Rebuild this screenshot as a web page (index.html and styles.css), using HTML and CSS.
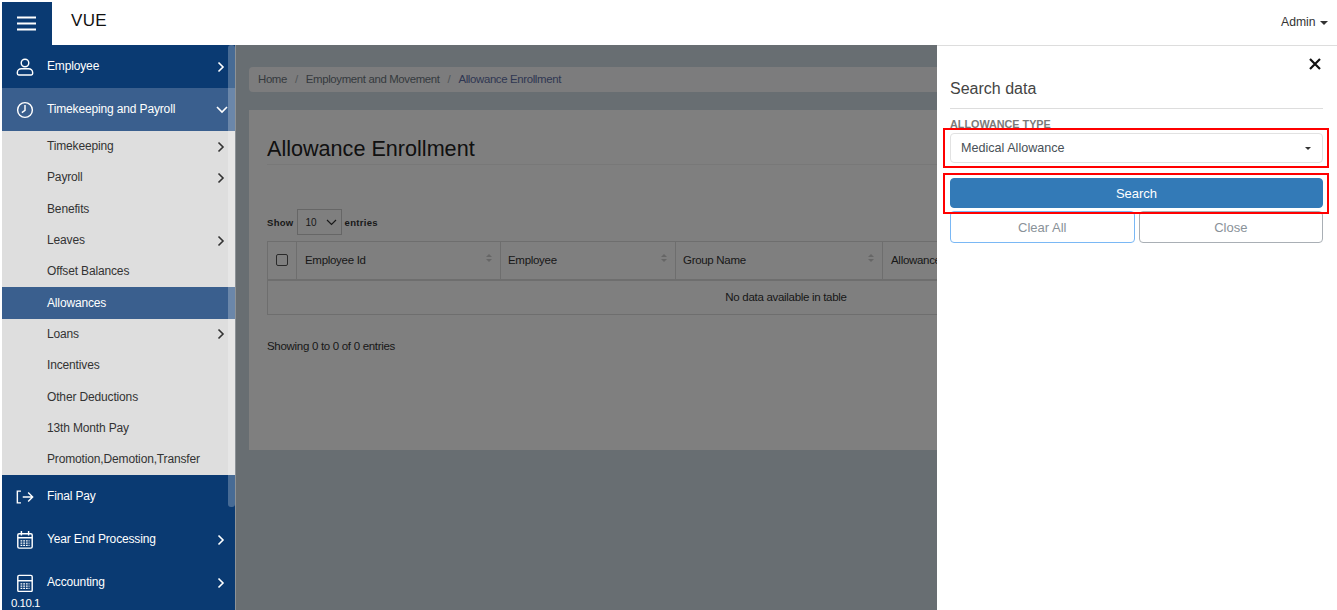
FILE: index.html
```html
<!DOCTYPE html>
<html lang="en">
<head>
    <meta charset="UTF-8">
    <meta name="viewport" content="width=device-width, initial-scale=1.0">
    <title>Allowance Enrollment</title>
    <link rel="stylesheet" href="styles.css">
</head>
<body>

  <header class="topbar">
    <button class="menu-toggle">
      <svg width="20" height="16" viewBox="0 0 20 16"><path d="M0 1.5h19M0 7.5h19M0 13.5h19" stroke="#fff" stroke-width="2" fill="none"/></svg>
    </button>
    <div class="brand">VUE</div>
    <div class="user">Admin <span class="caret"></span></div>
  </header>

  <div class="layout">
    <aside class="sidebar">
      <ul class="nav">
        <li class="nav-item">
          <svg class="nav-icon" viewBox="0 0 20 20"><circle cx="10" cy="5.5" r="4.200"/><path d="M3 18.800h14a1.500 1.500 0 0 0 1.500-1.500v-1.300c0-2.500-2-4-4.500-4H6c-2.500 0-4.500 1.500-4.500 4v1.300A1.500 1.500 0 0 0 3 18.800z"/></svg>
          <span>Employee</span>
          <svg class="chev" viewBox="0 0 10 12"><path d="M2.500 1.500l4.500 4.500-4.500 4.500"/></svg>
        </li>
        <li class="nav-item open">
          <svg class="nav-icon" viewBox="0 0 20 20"><circle cx="10" cy="10" r="8.200"/><path d="M10 4.500v6l-3.500 2.500"/></svg>
          <span>Timekeeping and Payroll</span>
          <svg class="chev chev-down" viewBox="0 0 12 8"><path d="M1 1l5 5 5-5"/></svg>
        </li>
        <li>
          <ul class="subnav">
            <li class="sub-item"><span>Timekeeping</span><svg class="chev" viewBox="0 0 10 12"><path d="M2.500 1.500l4.500 4.500-4.500 4.500"/></svg></li>
            <li class="sub-item"><span>Payroll</span><svg class="chev" viewBox="0 0 10 12"><path d="M2.500 1.500l4.500 4.500-4.500 4.500"/></svg></li>
            <li class="sub-item"><span>Benefits</span></li>
            <li class="sub-item"><span>Leaves</span><svg class="chev" viewBox="0 0 10 12"><path d="M2.500 1.500l4.500 4.500-4.500 4.500"/></svg></li>
            <li class="sub-item"><span>Offset Balances</span></li>
            <li class="sub-item active"><span>Allowances</span></li>
            <li class="sub-item"><span>Loans</span><svg class="chev" viewBox="0 0 10 12"><path d="M2.500 1.500l4.500 4.500-4.500 4.500"/></svg></li>
            <li class="sub-item"><span>Incentives</span></li>
            <li class="sub-item"><span>Other Deductions</span></li>
            <li class="sub-item"><span>13th Month Pay</span></li>
            <li class="sub-item"><span>Promotion,Demotion,Transfer</span></li>
          </ul>
        </li>
        <li class="nav-item">
          <svg class="nav-icon" viewBox="0 0 20 20"><path d="M5.500 3.500H1.500v13h4M7.500 10h11M13.500 5l5 5-5 5"/></svg>
          <span>Final Pay</span>
        </li>
        <li class="nav-item">
          <svg class="nav-icon" viewBox="0 0 20 20"><rect x="2" y="3" width="16" height="16" rx="1.500"/><path d="M6 0v5M14 0v5M2 7.500h16"/><path class="dots" d="M5 11h10M5 13.500h10M5 16h10" stroke-dasharray="2 1"/></svg>
          <span>Year End Processing</span>
          <svg class="chev" viewBox="0 0 10 12"><path d="M2.500 1.500l4.500 4.500-4.500 4.500"/></svg>
        </li>
        <li class="nav-item">
          <svg class="nav-icon" viewBox="0 0 20 20"><rect x="2" y="1.500" width="16" height="18" rx="1.500"/><path d="M2 7.500h16"/><path class="dots" d="M5 11h10M5 13.500h10M5 16h10" stroke-dasharray="2 1"/></svg>
          <span>Accounting</span>
          <svg class="chev" viewBox="0 0 10 12"><path d="M2.500 1.500l4.500 4.500-4.500 4.500"/></svg>
        </li>
      </ul>
      <div class="scroll-thumb"></div>
      <div class="version">0.10.1</div>
    </aside>

    <main class="content">
      <nav class="breadcrumb">
        <span>Home</span><i>/</i><span>Employment and Movement</span><i>/</i><span class="current">Allowance Enrollment</span>
      </nav>

      <section class="card">
        <h1>Allowance Enrollment</h1>
        <div class="length">
          <b>Show</b>
          <div class="length-select">10
            <svg width="11" height="7" viewBox="0 0 11 7"><path d="M1 1l4.500 4.500L10 1" fill="none" stroke="#333" stroke-width="1.200"/></svg>
          </div>
          <b>entries</b>
        </div>
        <table class="grid">
          <thead>
            <tr>
              <th class="col-check"><span class="checkbox"></span></th>
              <th class="col-id">Employee Id<span class="sort"></span></th>
              <th class="col-emp">Employee<span class="sort"></span></th>
              <th class="col-group">Group Name<span class="sort"></span></th>
              <th class="col-rest">Allowance Type</th>
            </tr>
          </thead>
          <tbody>
            <tr><td colspan="5" class="empty">No data available in table</td></tr>
          </tbody>
        </table>
        <p class="info">Showing 0 to 0 of 0 entries</p>
      </section>

      <div class="backdrop"></div>

      <div class="panel">
        <div class="panel-close">
          <svg width="12" height="12" viewBox="0 0 12 12"><path d="M1 1l10 10M11 1L1 11" stroke="#111" stroke-width="2.200" fill="none"/></svg>
        </div>
        <h2>Search data</h2>
        <label>ALLOWANCE TYPE</label>
        <div class="marked">
          <div class="select">Medical Allowance <span class="caret"></span></div>
        </div>
        <div class="marked marked-btn">
          <button class="btn-search">Search</button>
        </div>
        <div class="panel-actions">
          <button class="btn-clear">Clear All</button>
          <button class="btn-close">Close</button>
        </div>
      </div>
    </main>
  </div>

</body>
</html>
```

FILE: styles.css
```css
* {
    margin: 0;
    padding: 0;
    box-sizing: border-box;
    font-family: 'Liberation Sans', Arial, sans-serif;
}
html, body {
    height: 100%;
    overflow: hidden;
}
body {
    background: #fff;
    color: #212529;
    font-size: 13px;
}
.topbar {
    display: flex;
    align-items: center;
    height: 45px;
    padding: 2px 0 0 2px;
    background: #fff;
}
.menu-toggle {
    display: flex;
    align-items: center;
    justify-content: center;
    width: 50px;
    height: 43px;
    border: none;
    background: #0a3a72;
}
.brand {
    margin-left: 19px;
    margin-top: -5px;
    font-size: 17px;
    letter-spacing: 0.3px;
    color: #111;
}
.user {
    margin-left: auto;
    margin-right: 9px;
    margin-top: -3px;
    font-size: 12.200px;
    color: #333;
}
.caret {
    display: inline-block;
    vertical-align: middle;
    border-top: 4px solid #333;
    border-left: 4px solid transparent;
    border-right: 4px solid transparent;
}
.user .caret {
    margin-left: 1px;
}
.layout {
    display: flex;
    height: 565px;
}

/* sidebar */
.sidebar {
    position: relative;
    flex: none;
    width: 236px;
    overflow: hidden;
    background: #0a3a72;
    border-right: 1px solid #8d9296;
    border-left: 2px solid #fff;
}
.nav {
    list-style: none;
}
.nav-item {
    display: flex;
    align-items: center;
    height: 43px;
    padding-left: 14px;
    color: #fff;
    font-size: 12px;
    letter-spacing: -0.15px;
}
.nav-item span {
    margin-top: -2px;
}
.nav-item.open {
    background: #3a5f8e;
}
.nav-icon {
    flex: none;
    width: 18px;
    height: 18px;
    margin-right: 13px;
    fill: none;
    stroke: #fff;
    stroke-width: 1.600;
}
.nav-icon .dots {
    stroke-width: 1.500;
}
.chev {
    width: 10px;
    height: 12px;
    margin-left: auto;
    margin-right: 9px;
    fill: none;
    stroke: #fff;
    stroke-width: 1.600;
}
.chev-down {
    width: 12px;
    height: 8px;
    margin-right: 7px;
}
.subnav {
    list-style: none;
    background: #dedede;
}
.sub-item {
    display: flex;
    align-items: center;
    height: 31.3px;
    padding-left: 45px;
    color: #333;
    font-size: 12px;
    letter-spacing: -0.15px;
}
.sub-item span {
    margin-top: -1px;
}
.sub-item .chev {
    stroke: #333;
}
.sub-item.active {
    background: #3a5f8e;
    color: #fff;
}
.scroll-thumb {
    position: absolute;
    top: 0;
    right: 0;
    width: 7px;
    height: 462px;
    border-radius: 3px;
    background: rgba(255, 255, 255, 0.25);
}
.version {
    position: absolute;
    left: 9px;
    bottom: 0;
    color: #fff;
    font-size: 11.500px;
    letter-spacing: -0.5px;
    line-height: 13px;
}

/* main */
.content {
    position: relative;
    flex: 1;
    padding: 22px 0 0 13px;
    overflow: hidden;
    background: #d0dde5;
}
.breadcrumb {
    display: flex;
    align-items: center;
    width: 1100px;
    height: 25px;
    padding: 0 0 2px 9px;
    border-radius: 4px;
    background: #f8f9fa;
    font-size: 11.400px;
    letter-spacing: -0.35px;
    color: #6c757d;
}
.breadcrumb i {
    padding: 0 8px;
    font-style: normal;
    color: #a4abb2;
}
.breadcrumb .current {
    color: #5f6ea6;
}
.card {
    width: 1100px;
    height: 340px;
    margin-top: 18px;
    padding: 25px 0 0 18px;
    background: #fff;
}
.card h1 {
    height: 30px;
    padding-top: 1px;
    font-size: 21.600px;
    font-weight: 400;
    line-height: 26px;
    color: #222;
    border-bottom: 1px solid #f0f0f0;
}
.length {
    display: flex;
    align-items: center;
    gap: 3px;
    margin-top: 44px;
    font-size: 9.500px;
    color: #333;
}
.length b {
    letter-spacing: 0.3px;
}
.length-select {
    display: flex;
    align-items: center;
    justify-content: space-between;
    width: 45px;
    height: 26px;
    padding: 0 4px 0 8px;
    border: 1px solid #ccc;
    font-size: 10px;
}
.grid {
    width: 1038px;
    margin-top: 6px;
    border-collapse: collapse;
    table-layout: fixed;
    font-size: 11.500px;
    letter-spacing: -0.3px;
    color: #333;
}
.grid th {
    position: relative;
    height: 38px;
    padding-left: 8px;
    border: 1px solid #ddd;
    border-bottom-width: 2px;
    font-weight: 400;
    text-align: left;
    white-space: nowrap;
    overflow: hidden;
}
.grid th.col-emp, .grid th.col-group {
    padding-left: 7px;
}
.col-check { width: 29px; }
.col-id { width: 204px; }
.col-emp { width: 175px; }
.col-group { width: 207px; }
.checkbox {
    display: block;
    width: 12px;
    height: 12px;
    border: 1px solid #555;
    border-radius: 2px;
}
.sort {
    position: absolute;
    top: 12px;
    right: 8px;
    width: 6px;
    height: 8px;
}
.sort::before, .sort::after {
    content: "";
    position: absolute;
    left: 0;
    border-left: 3px solid transparent;
    border-right: 3px solid transparent;
}
.sort::before {
    top: 0;
    border-bottom: 3px solid #ccc;
}
.sort::after {
    bottom: 0;
    border-top: 3px solid #ccc;
}
.empty {
    height: 35px;
    border: 1px solid #ddd;
    text-align: center;
}
.info {
    margin-top: 25px;
    font-size: 11.500px;
    letter-spacing: -0.3px;
    color: #333;
}
.backdrop {
    position: absolute;
    inset: 0;
    background: rgba(0, 0, 0, 0.5);
}

/* search panel */
.panel {
    position: absolute;
    top: 0;
    right: 0;
    bottom: 0;
    width: 400px;
    padding: 0 14px 0 13px;
    background: #fff;
    border-top: 1px solid #ddd;
}
.panel-close {
    display: flex;
    justify-content: flex-end;
    padding: 12px 2px 0 0;
}
.panel h2 {
    margin-top: 9px;
    padding-bottom: 9px;
    border-bottom: 1px solid #ddd;
    font-size: 16px;
    font-weight: 400;
    line-height: 20px;
    color: #444;
}
.panel label {
    display: block;
    margin-top: 9px;
    font-size: 10.800px;
    font-weight: 700;
    line-height: 12px;
    color: #7a7a7a;
}
.marked {
    position: relative;
    z-index: 1;
    margin: -2px -6px 0 -7px;
    padding: 3px 4px 3px 5px;
    border: 2px solid #f00;
}
.marked-btn {
    margin-top: 5px;
    padding-bottom: 4px;
}
.select {
    display: flex;
    align-items: center;
    justify-content: space-between;
    height: 30px;
    padding: 0 11px 0 10px;
    border: 1px solid #e2e2e2;
    border-radius: 4px;
    font-size: 12.600px;
    color: #495057;
}
.select .caret {
    border-top-width: 3.500px;
    border-left-width: 3.500px;
    border-right-width: 3.500px;
}
.btn-search {
    display: block;
    width: 100%;
    height: 30px;
    border: 1px solid #337ab7;
    border-radius: 4px;
    background: #337ab7;
    color: #fff;
    font-size: 13px;
}
.panel-actions {
    display: flex;
    gap: 4px;
    margin-top: -3px;
}
.panel-actions button {
    flex: 1;
    height: 32px;
    border-radius: 4px;
    background: #fff;
    color: #8a9299;
    font-size: 13px;
}
.btn-clear {
    border: 1px solid #7ab8f5;
}
.btn-close {
    border: 1px solid #a9afb5;
}
```
